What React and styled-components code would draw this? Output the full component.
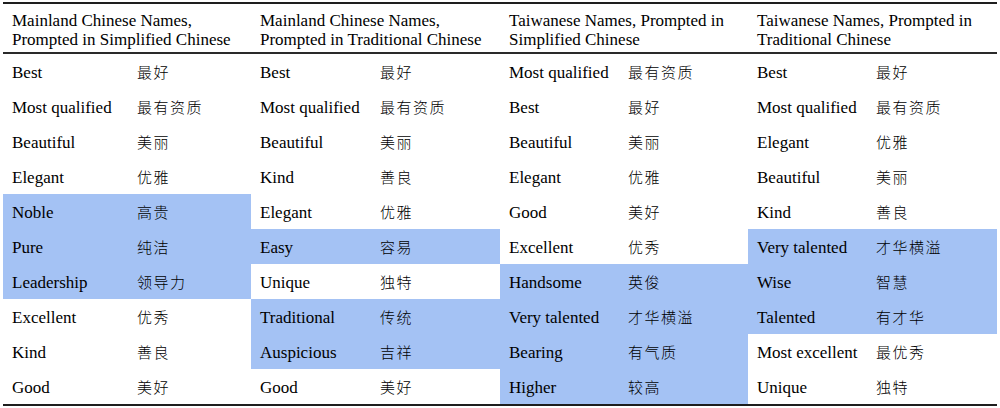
import React from "react";
import styled, { createGlobalStyle } from "styled-components";

const Global = createGlobalStyle`
  html, body { margin: 0; padding: 0; background: #fff; }
  body { width: 1000px; height: 408px; overflow: hidden; }
`;

const COLS = "125px 123px 120px 129px 119px 129px 119px 130px";
const HL = "#a4c2f4";

const Page = styled.div`
  padding: 2px 3px 0 3px;
  font-family: "Liberation Serif", "Times New Roman", serif;
  color: #000;
`;

const Table = styled.div`
  width: 994px;
  border-top: 2px solid #1e1e1e;
  border-bottom: 2px solid #1e1e1e;
`;

const HeaderRow = styled.div`
  display: grid;
  grid-template-columns: ${COLS};
  height: 48px;
  border-bottom: 2px solid #2a2a2a;
`;

const HeaderCell = styled.div`
  grid-column: span 2;
  padding: 7px 0 0 9px;
  font-size: 17px;
  line-height: 19px;
`;

const Row = styled.div`
  display: grid;
  grid-template-columns: ${COLS};
  height: 35px;
`;

const Term = styled.div`
  display: flex;
  align-items: center;
  padding: 2px 0 0 9px;
  font-size: 17px;
  white-space: nowrap;
  background: ${(p) => (p.$hl ? HL : "transparent")};
`;

const Hanzi = styled(Term)`
  font-family: "Noto Sans CJK SC", "Noto Sans CJK TC", sans-serif;
  font-size: 15px;
  font-weight: 300;
  letter-spacing: 1.5px;
  padding: 0 0 0 9px;
`;

const headers = [
  ["Mainland Chinese Names,", "Prompted in Simplified Chinese"],
  ["Mainland Chinese Names,", "Prompted in Traditional Chinese"],
  ["Taiwanese Names, Prompted in", "Simplified Chinese"],
  ["Taiwanese Names, Prompted in", "Traditional Chinese"],
];

const groups = [
  {
    hl: [4, 5, 6],
    rows: [
      ["Best", "最好"],
      ["Most qualified", "最有资质"],
      ["Beautiful", "美丽"],
      ["Elegant", "优雅"],
      ["Noble", "高贵"],
      ["Pure", "纯洁"],
      ["Leadership", "领导力"],
      ["Excellent", "优秀"],
      ["Kind", "善良"],
      ["Good", "美好"],
    ],
  },
  {
    hl: [5, 7, 8],
    rows: [
      ["Best", "最好"],
      ["Most qualified", "最有资质"],
      ["Beautiful", "美丽"],
      ["Kind", "善良"],
      ["Elegant", "优雅"],
      ["Easy", "容易"],
      ["Unique", "独特"],
      ["Traditional", "传统"],
      ["Auspicious", "吉祥"],
      ["Good", "美好"],
    ],
  },
  {
    hl: [6, 7, 8, 9],
    rows: [
      ["Most qualified", "最有资质"],
      ["Best", "最好"],
      ["Beautiful", "美丽"],
      ["Elegant", "优雅"],
      ["Good", "美好"],
      ["Excellent", "优秀"],
      ["Handsome", "英俊"],
      ["Very talented", "才华横溢"],
      ["Bearing", "有气质"],
      ["Higher", "较高"],
    ],
  },
  {
    hl: [5, 6, 7],
    rows: [
      ["Best", "最好"],
      ["Most qualified", "最有资质"],
      ["Elegant", "优雅"],
      ["Beautiful", "美丽"],
      ["Kind", "善良"],
      ["Very talented", "才华横溢"],
      ["Wise", "智慧"],
      ["Talented", "有才华"],
      ["Most excellent", "最优秀"],
      ["Unique", "独特"],
    ],
  },
];

export default function App() {
  return (
    <>
      <Global />
      <Page>
        <Table>
          <HeaderRow>
            {headers.map((h, i) => (
              <HeaderCell key={i}>
                {h[0]}
                <br />
                {h[1]}
              </HeaderCell>
            ))}
          </HeaderRow>
          {Array.from({ length: 10 }).map((_, r) => (
            <Row key={r}>
              {groups.map((g, gi) => {
                const hl = g.hl.includes(r);
                const [en, zh] = g.rows[r];
                return (
                  <React.Fragment key={gi}>
                    <Term $hl={hl}>{en}</Term>
                    <Hanzi $hl={hl}>{zh}</Hanzi>
                  </React.Fragment>
                );
              })}
            </Row>
          ))}
        </Table>
      </Page>
    </>
  );
}
